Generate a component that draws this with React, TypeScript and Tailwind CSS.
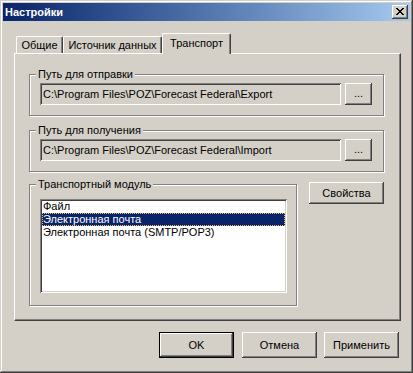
const font = "font-['Liberation_Sans',Arial,sans-serif]";

const raised =
  "shadow-[inset_-1px_-1px_#404040,inset_1px_1px_#ffffff,inset_-2px_-2px_#808080,inset_2px_2px_#D4D0C8]";
const sunken =
  "shadow-[inset_1px_1px_#808080,inset_-1px_-1px_#ffffff,inset_2px_2px_#404040,inset_-2px_-2px_#D4D0C8]";

function Button({ label, className = "", isDefault = false }: { label: string; className?: string; isDefault?: boolean }) {
  if (isDefault) {
    return (
      <div className={`border border-black bg-[#D4D0C8] ${className}`}>
        <div className={`w-full h-full flex items-center justify-center text-[11px] text-black ${raised}`}>{label}</div>
      </div>
    );
  }
  return (
    <div className={`bg-[#D4D0C8] flex items-center justify-center text-[11px] text-black ${raised} ${className}`}>
      {label}
    </div>
  );
}

function CloseGlyph() {
  const px = [
    [0, 0], [1, 0], [6, 0], [7, 0],
    [1, 1], [2, 1], [5, 1], [6, 1],
    [2, 2], [3, 2], [4, 2], [5, 2],
    [3, 3], [4, 3],
    [2, 4], [3, 4], [4, 4], [5, 4],
    [1, 5], [2, 5], [5, 5], [6, 5],
    [0, 6], [1, 6], [6, 6], [7, 6],
  ];
  return (
    <svg width="8" height="7" viewBox="0 0 8 7" shapeRendering="crispEdges">
      {px.map(([x, y]) => (
        <rect key={`${x}-${y}`} x={x} y={y} width="1" height="1" fill="#000" />
      ))}
    </svg>
  );
}

function Group({ label, className = "", children }: { label: string; className?: string; children: React.ReactNode }) {
  return (
    <div className={`relative border border-[#808080] shadow-[1px_1px_0_#ffffff,inset_1px_1px_0_#ffffff] ${className}`}>
      <span className="absolute left-[6px] -top-[8px] px-[2px] bg-[#D4D0C8] text-[11px] leading-[14px] text-black">
        {label}
      </span>
      {children}
    </div>
  );
}

function PathRow({ value }: { value: string }) {
  return (
    <div className="flex items-start pt-[8px] pl-[10px]">
      <div className={`w-[301px] h-[22px] bg-[#D4D0C8] ${sunken} pl-[3px] flex items-center text-[11px] text-black whitespace-nowrap`}>
        {value}
      </div>
      <Button label="..." className="ml-[4px] w-[27px] h-[22px] pb-[2px]" />
    </div>
  );
}

export default function App() {
  const items = ["Файл", "Электронная почта", "Электронная почта (SMTP/POP3)"];

  return (
    <div
      className={`w-[413px] h-[373px] bg-[#D4D0C8] p-[3px] ${font} shadow-[inset_-1px_-1px_#404040,inset_1px_1px_#D4D0C8,inset_-2px_-2px_#808080,inset_2px_2px_#ffffff]`}
    >
      {/* title bar */}
      <div className="h-[18px] flex items-center justify-between bg-gradient-to-r from-[#0A246A] to-[#A6CAF0] pl-[2px] pr-[2px]">
        <span className="text-white font-bold text-[11px] leading-none">Настройки</span>
        <div className={`w-[16px] h-[14px] bg-[#D4D0C8] ${raised} flex items-center justify-center pb-[1px]`}>
          <CloseGlyph />
        </div>
      </div>

      {/* tabs */}
      <div className="mt-[12px] ml-[11px] w-[387px]">
        <div className="flex items-end h-[20px] pl-[2px] relative z-10">
          <div className="w-[47px] h-[17px] border-l border-t border-white rounded-tl-[2px] shadow-[inset_-1px_0_#808080] border-r border-r-[#404040] rounded-tr-[2px] flex items-center justify-center text-[11px] text-black">
            Общие
          </div>
          <div className="w-[99px] h-[17px] border-l border-t border-white rounded-tl-[2px] shadow-[inset_-1px_0_#808080] border-r border-r-[#404040] rounded-tr-[2px] flex items-center justify-center text-[11px] text-black">
            Источник данных
          </div>
          <div className="w-[69px] h-[21px] -mb-[1px] bg-[#D4D0C8] border-l border-t border-white rounded-tl-[2px] shadow-[inset_-1px_0_#808080] border-r border-r-[#404040] rounded-tr-[2px] flex items-center justify-center pb-[2px] text-[11px] text-black">
            Транспорт
          </div>
        </div>

        {/* panel */}
        <div className="h-[268px] border-l border-t border-white border-r border-b border-r-[#404040] border-b-[#404040] shadow-[inset_-1px_-1px_#808080] pl-[14px] pt-[20px]">
          <Group label="Путь для отправки" className="w-[355px] h-[42px]">
            <PathRow value="C:\Program Files\POZ\Forecast Federal\Export" />
          </Group>
          <Group label="Путь для получения" className="w-[355px] h-[42px] mt-[14px]">
            <PathRow value="C:\Program Files\POZ\Forecast Federal\Import" />
          </Group>

          <div className="flex items-start mt-[10px]">
            <Group label="Транспортный модуль" className="w-[268px] h-[122px] mt-[2px]">
              <div className="pl-[10px] pt-[14px]">
                <div className={`w-[247px] h-[94px] bg-white ${sunken} p-[2px] pt-[1px]`}>
                  {items.map((it, i) => (
                    <div
                      key={it}
                      className={`h-[13px] leading-[13px] pl-[1px] text-[11px] whitespace-nowrap ${
                        i === 1
                          ? "bg-[#0A246A] text-white outline outline-1 outline-dotted outline-[#F0C060] -outline-offset-1"
                          : "text-black"
                      }`}
                    >
                      {it}
                    </div>
                  ))}
                </div>
              </div>
            </Group>
            <Button label="Свойства" className="ml-[12px] w-[75px] h-[22px]" />
          </div>
        </div>
      </div>

      {/* bottom buttons */}
      <div className="flex justify-end mt-[11px] pr-[11px]">
        <Button label="OK" isDefault className="w-[75px] h-[26px]" />
        <Button label="Отмена" className="ml-[8px] w-[75px] h-[26px]" />
        <Button label="Применить" className="ml-[7px] w-[75px] h-[26px]" />
      </div>
    </div>
  );
}
